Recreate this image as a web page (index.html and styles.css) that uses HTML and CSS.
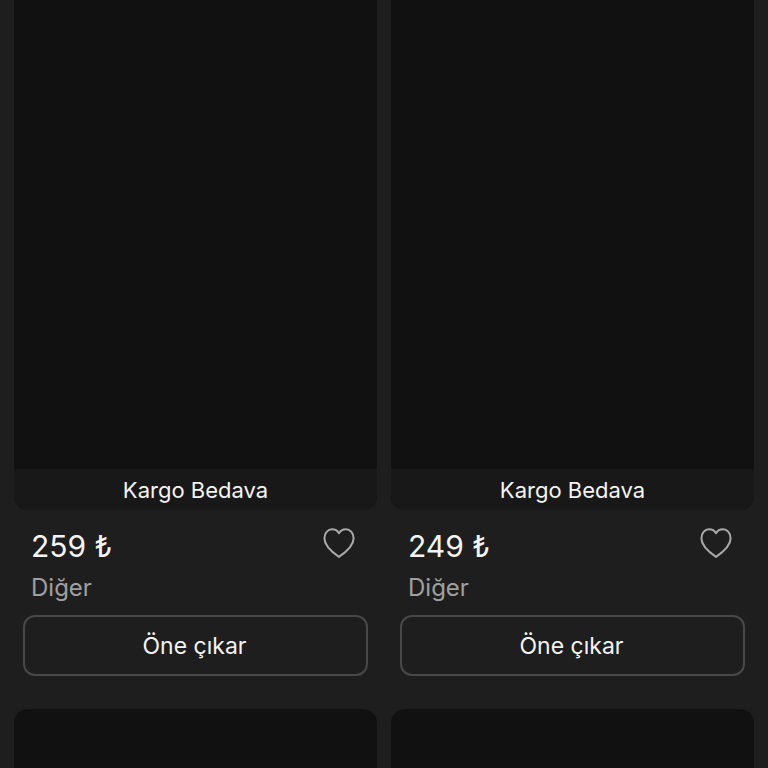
FILE: index.html
```html
<!DOCTYPE html>
<html lang="tr">
<head>
    <meta charset="UTF-8">
    <meta name="viewport" content="width=device-width, initial-scale=1">
    <title>Ürünler</title>
    <link rel="stylesheet" href="styles.css">
</head>
<body>
    <main class="product-grid">
        <article class="card">
            <div class="card-image">
                <div class="shipping">Kargo Bedava</div>
            </div>
            <div class="card-info">
                <div class="price-row">
                    <span class="price">259 ₺</span>
                    <button class="like-btn" type="button" aria-label="Beğen">
                        <svg viewBox="0 0 32 30" width="32" height="30">
                            <path d="M16 28.9C9.5 24.4 1.4 18.2 1.4 10.2C1.4 5 4.8 1.3 9 1.3C12.2 1.3 14.6 2.8 16 5.2C17.4 2.8 19.8 1.3 23 1.3C27.2 1.3 30.6 5 30.6 10.2C30.6 18.2 22.5 24.4 16 28.9Z"/>
                        </svg>
                    </button>
                </div>
                <div class="brand">Diğer</div>
            </div>
            <button class="promote-btn" type="button">Öne çıkar</button>
        </article>
        <article class="card">
            <div class="card-image">
                <div class="shipping">Kargo Bedava</div>
            </div>
            <div class="card-info">
                <div class="price-row">
                    <span class="price">249 ₺</span>
                    <button class="like-btn" type="button" aria-label="Beğen">
                        <svg viewBox="0 0 32 30" width="32" height="30">
                            <path d="M16 28.9C9.5 24.4 1.4 18.2 1.4 10.2C1.4 5 4.8 1.3 9 1.3C12.2 1.3 14.6 2.8 16 5.2C17.4 2.8 19.8 1.3 23 1.3C27.2 1.3 30.6 5 30.6 10.2C30.6 18.2 22.5 24.4 16 28.9Z"/>
                        </svg>
                    </button>
                </div>
                <div class="brand">Diğer</div>
            </div>
            <button class="promote-btn" type="button">Öne çıkar</button>
        </article>
        <article class="card">
            <div class="card-image next"></div>
        </article>
        <article class="card">
            <div class="card-image next"></div>
        </article>
    </main>
</body>
</html>
```

FILE: styles.css
```css
body {
    margin: 0;
    background: #1e1e1e;
    color: #f4f4f4;
    font-family: Inter, "Liberation Sans", sans-serif;
}
.product-grid {
    display: grid;
    grid-template-columns: 1fr 1fr;
    grid-template-rows: auto 1fr;
    gap: 33px 14px;
    min-height: 100vh;
    padding: 0 14px;
    box-sizing: border-box;
}
.card {
    display: flex;
    flex-direction: column;
}
.card-image {
    display: flex;
    flex-direction: column;
    justify-content: flex-end;
    height: 510px;
    background: #111;
    border-radius: 0 0 14px 14px;
    overflow: hidden;
}
.card-image.next {
    flex: 1;
    height: auto;
    border-radius: 14px 14px 0 0;
}
.shipping {
    padding-top: 1px;
    background: #181818;
    font-size: 22px;
    line-height: 40px;
    text-align: center;
}
.card-info {
    padding: 16px 22px 11px 17px;
}
.price-row {
    display: flex;
    justify-content: space-between;
    align-items: center;
}
.price {
    font-size: 30px;
    line-height: 40px;
}
.like-btn {
    display: flex;
    padding: 0 0 6px;
    border: none;
    background: none;
    cursor: pointer;
}
.like-btn svg {
    fill: none;
    stroke: #aaa;
    stroke-width: 2;
    stroke-linejoin: round;
}
.brand {
    margin-top: 6px;
    color: #a0a0a0;
    font-size: 24px;
    line-height: 32px;
}
.promote-btn {
    margin: 0 9px;
    padding: 1px 2px 0 0;
    border: 2px solid #484848;
    border-radius: 12px;
    background: none;
    color: inherit;
    font-family: inherit;
    font-size: 23px;
    line-height: 56px;
    cursor: pointer;
}
```
